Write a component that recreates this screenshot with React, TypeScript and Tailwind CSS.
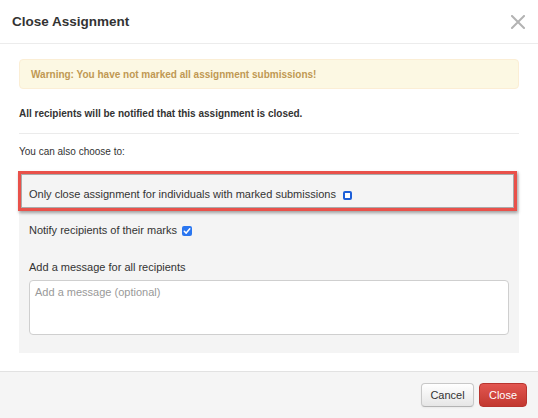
function CheckIcon() {
  return (
    <svg viewBox="0 0 10 10" className="w-[10px] h-[10px]">
      <path d="M2.3 5.2 L4.2 7.1 L7.8 2.8" fill="none" stroke="#fff" strokeWidth="1.5" strokeLinecap="round" strokeLinejoin="round" />
    </svg>
  );
}

function CloseIcon() {
  return (
    <svg viewBox="0 0 14 14" className="w-[14px] h-[14px]">
      <path d="M1 1 L13 13 M13 1 L1 13" stroke="#b3b3b3" strokeWidth="2" strokeLinecap="square" />
    </svg>
  );
}

export default function App() {
  return (
    <div className="w-[538px] h-[418px] bg-white flex flex-col text-[#333] font-['Liberation_Sans',Arial,sans-serif] overflow-hidden">
      {/* Header */}
      <div className="h-[44px] shrink-0 flex items-center justify-between pl-3 pr-[13px] border-b border-[#ececec]">
        <h3 className="text-[13.5px] font-bold leading-none">Close Assignment</h3>
        <button className="flex" aria-label="Close">
          <CloseIcon />
        </button>
      </div>

      {/* Body */}
      <div className="flex-1 px-[19px] pt-[15px]">
        <div className="h-[30px] flex items-center px-[11px] bg-[#fcf8e3] border border-[#fbeed5] rounded-[4px] text-[#c09853] text-[10px] font-bold">
          Warning: You have not marked all assignment submissions!
        </div>

        <p className="mt-[18px] text-[10px] leading-[14px] font-bold">
          All recipients will be notified that this assignment is closed.
        </p>

        <div className="mt-[12px] h-px bg-[#ebebeb]" />

        <p className="mt-[11px] text-[10px] leading-[14px]">You can also choose to:</p>

        <div className="mt-[12px] bg-[#f4f4f4] pb-[18px]">
          <div className="-ml-px mr-[2px] border-[3px] border-[#e9514a] pl-[8px] pt-[13px] pb-[6px] flex items-center gap-[7px] text-[11px] leading-[15px] shadow-[inset_0_0_0_1px_rgba(0,0,0,0.3),1px_2px_3px_rgba(0,0,0,0.35)]">
            <span>Only close assignment for individuals with marked submissions</span>
            <span className="box-border w-[9px] h-[9px] mt-[2px] rounded-[2px] border-2 border-solid border-[#1d5fd8] bg-white" />
          </div>

          <div className="px-[10px]">
            <div className="mt-[12px] flex items-center gap-[5px] text-[11px] leading-[15px]">
              <span>Notify recipients of their marks</span>
              <span className="w-[10px] h-[10px] rounded-[2px] bg-[#2a76f0] flex items-center justify-center">
                <CheckIcon />
              </span>
            </div>

            <label className="block mt-[22px] text-[11px] leading-[15px]">Add a message for all recipients</label>
            <textarea
              placeholder="Add a message (optional)"
              className="mt-[5px] block w-full h-[55px] resize-none bg-white border border-[#cfcfcf] rounded-[4px] px-[5px] pt-[4px] text-[11px] leading-[15px] placeholder:text-[#999] outline-none"
            />
          </div>
        </div>
      </div>

      {/* Footer */}
      <div className="h-[47px] shrink-0 bg-[#f5f5f5] border-t border-[#e2e2e2] flex items-center justify-end gap-[5px] pr-[11px]">
        <button className="h-[24px] w-[53px] text-[11px] text-[#333] rounded-[4px] border border-[#c8c8c8] border-b-[#b3b3b3] bg-gradient-to-b from-white to-[#e6e6e6] shadow-[inset_0_1px_0_rgba(255,255,255,0.2),0_1px_2px_rgba(0,0,0,0.05)]">
          Cancel
        </button>
        <button className="h-[24px] w-[48px] text-[11px] text-white rounded-[4px] border border-[#b8352f] bg-gradient-to-b from-[#e25650] to-[#c2382f]">
          Close
        </button>
      </div>
    </div>
  );
}
